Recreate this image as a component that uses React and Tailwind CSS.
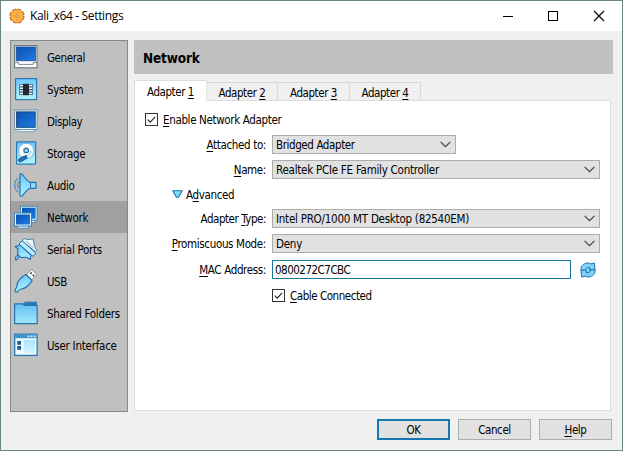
import React from "react";

const U = ({ children }) => (
  <span className="underline decoration-1 underline-offset-2">{children}</span>
);

const Blues = () => (
  <defs>
    <linearGradient id="sky" x1="0" y1="0" x2="0" y2="1">
      <stop offset="0" stopColor="#6cc8fa" />
      <stop offset="1" stopColor="#b4f3ff" />
    </linearGradient>
    <linearGradient id="screen" x1="0" y1="0" x2="1" y2="1">
      <stop offset="0" stopColor="#0a50b4" />
      <stop offset="1" stopColor="#1f7ce0" />
    </linearGradient>
    <linearGradient id="folder" x1="0" y1="0" x2="0" y2="1">
      <stop offset="0" stopColor="#62bdf2" />
      <stop offset="1" stopColor="#a2eafc" />
    </linearGradient>
  </defs>
);

const GeneralIcon = () => (
  <>
    <rect x="0.6" y="0.6" width="22.4" height="22.2" fill="#fff" stroke="#67737e" strokeWidth="1.1" />
    <rect x="2.2" y="2" width="19.2" height="13.8" fill="url(#screen)" stroke="#1d4d91" strokeWidth="0.8" />
    <path d="M1 17.6h3.6v1.8h14.6v-1.8H23" fill="none" stroke="#7c8893" strokeWidth="1" />
  </>
);
const SystemIcon = () => (
  <>
    <rect x="1.6" y="1.6" width="21" height="21" fill="url(#sky)" stroke="#2a78ae" strokeWidth="1.2" />
    <rect x="5.3" y="7" width="13.4" height="11" fill="#3b5668" />
    <path d="M6 8.5h12M6 11.2h12M6 13.9h12M6 16.5h12" stroke="#f2fcff" strokeWidth="1.4" />
    <rect x="9" y="6.8" width="6" height="11.4" fill="#202a35" />
  </>
);
const DisplayIcon = () => (
  <>
    <path d="M4 20h16v2.6H4z" fill="#e9fbff" stroke="#5f9ab5" strokeWidth="0.7" />
    <rect x="0.7" y="1" width="22.4" height="19.4" fill="#e2faff" stroke="#5c8399" strokeWidth="0.8" />
    <rect x="2.6" y="2.9" width="18.6" height="15.4" fill="url(#screen)" stroke="#173d75" strokeWidth="0.9" />
  </>
);
const StorageIcon = () => (
  <>
    <rect x="2.6" y="0.8" width="19" height="22.4" rx="0.8" fill="url(#sky)" stroke="#2a78ba" strokeWidth="1.2" />
    <circle cx="12.2" cy="9.8" r="7.6" fill="#fff" stroke="#6cacd0" strokeWidth="0.8" />
    <circle cx="12.2" cy="9.4" r="2.3" fill="#9ad6f5" stroke="#2971a4" strokeWidth="1.2" />
    <path d="M16.8 10c.3 3.5-2.6 4.6-6 4.8" fill="none" stroke="#6fb2d2" strokeWidth="1" />
    <path d="M12.3 14.6l1 2.6-6.2 3.6c-2 .9-3.8-1.3-2.2-2.9l3.8-2.3z" fill="#2273b8" stroke="#124d80" strokeWidth="0.7" />
  </>
);
const AudioIcon = () => (
  <>
    <path d="M4 5.3C-.4 8.5-.4 15.5 4 19M5.2 8.5c-2.3 1.5-2.3 5.5 0 7" fill="none" stroke="#4b90bf" strokeWidth="1.2" />
    <path d="M6 1.5c.3-1 2-.6 2.700.4C11 5 13 8 16 9.300h6v6h-6C13 16.500 11 19.500 8.700 22.400c-.7 1-2.400 1.300-2.700.300z" fill="url(#sky)" stroke="#2671ad" strokeWidth="1.2" strokeLinejoin="round" />
    <path d="M16.500 9v6.500" stroke="#2671ad" />
  </>
);
const NetworkIcon = () => (
  <>
    <path d="M10 15h11v2.500H10z" fill="#def9ff" stroke="#397ca9" strokeWidth="0.8" />
    <rect x="6.500" y="1.200" width="16.600" height="14" fill="#d9f8ff" stroke="#397ca9" strokeWidth="0.9" />
    <rect x="8" y="2.700" width="13.600" height="11" fill="url(#screen)" />
    <path d="M3.500 20.700h11v2.500h-11z" fill="#def9ff" stroke="#397ca9" strokeWidth="0.8" />
    <rect x="0.500" y="8" width="17" height="13" fill="#d9f8ff" stroke="#397ca9" strokeWidth="0.9" />
    <rect x="2" y="9.500" width="14" height="10" fill="url(#screen)" />
  </>
);
const SerialIcon = () => (
  <>
    <path d="M2.200 22c0-2 2-3 3-4" fill="none" stroke="#2467a0" strokeWidth="3" strokeLinecap="round" />
    <path d="M2.200 22c0-2 2-3 3-4" fill="none" stroke="#8edcfa" strokeWidth="1.200" />
    <path d="M1.200 9.500L6.500 8 17 18l-.8 4.500-3.700-2.200-6 .2-3-3.500.5-5z" fill="url(#sky)" stroke="#2671ad" strokeWidth="1.200" strokeLinejoin="round" />
    <path d="M5 7l3.200-3.300L22 16.400l-3 3z" fill="#b9edff" stroke="#2671ad" strokeLinejoin="round" />
    <path d="M8.400 3.800l2.400-2.400 2 1.200 6.400-.6 1.300 7.400 2.200 3.600-1.500 1.600z" fill="#e8f9ff" stroke="#47799b" strokeWidth="0.9" strokeLinejoin="round" />
    <path d="M12 4l7.600 7" stroke="#8fa9b9" strokeWidth="0.9" />
  </>
);
const UsbIcon = () => (
  <>
    <path d="M12.800 5.500l5-5 5 5.200-5 5z" fill="#fff" stroke="#7b848a" strokeWidth="0.9" />
    <path d="M16.400 4.800l1.300-1.300M18.800 7.200l1.300-1.300" stroke="#343c43" strokeWidth="1.700" />
    <path d="M1 22.800c-.6-3 1.700-3 2-6C3 10.500 8.500 8 11.800 5.400l6.300 6.300C15.500 15 13.500 19.400 7.300 20c-3 .4-3 2.600-5 3.200z" fill="url(#sky)" stroke="#2671ad" strokeWidth="1.200" strokeLinejoin="round" />
  </>
);
const FolderIcon = () => (
  <>
    <path d="M9 4l2-2.800h11.500V6H9z" fill="#2c7cba" stroke="#2671ad" />
    <path d="M.6 2.800h8l2 1.600h12.600v18.200H.6z" fill="url(#folder)" stroke="#2671ad" strokeWidth="1.200" />
  </>
);
const InterfaceIcon = () => (
  <>
    <rect x="0.700" y="1.200" width="22.400" height="21.200" fill="#eefcff" stroke="#2878b0" strokeWidth="1.300" />
    <rect x="1.200" y="1.600" width="21.400" height="3.600" fill="#3c93cf" />
    <path d="M13.500 3.400h1.800M16.600 3.400h1.800M19.700 3.400h1.800" stroke="#d6f6ff" strokeWidth="1.600" />
    <path d="M3.200 8h3.800v3.800H3.200zM3.200 13h3.800v3.800H3.200z" fill="#1b5c98" />
    <rect x="9.800" y="7" width="11.200" height="13.200" fill="url(#sky)" opacity=".5" />
  </>
);

const items = [
  ["General", GeneralIcon, "tracking-[-0.4px]"],
  ["System", SystemIcon, "tracking-[-0.4px]"],
  ["Display", DisplayIcon, "tracking-[-0.4px]"],
  ["Storage", StorageIcon, "tracking-[-0.3px]"],
  ["Audio", AudioIcon, "tracking-[-0.4px]"],
  ["Network", NetworkIcon, "tracking-[-0.3px]"],
  ["Serial Ports", SerialIcon, "tracking-[-0.3px]"],
  ["USB", UsbIcon, "tracking-[-0.5px]"],
  ["Shared Folders", FolderIcon, "tracking-[-0.3px]"],
  ["User Interface", InterfaceIcon, "tracking-[-0.25px]"],
];

const Check = () => (
  <svg className="block h-[13px] w-[13px] shrink-0" viewBox="0 0 13 13">
    <rect x="0.5" y="0.5" width="12" height="12" fill="#fff" stroke="#333" />
    <path d="M2.800 6.600l2.400 2.500 5-5.200" fill="none" stroke="#222" strokeWidth="1.100" />
  </svg>
);

const Combo = ({ className, children }) => (
  <div className={"flex h-[19px] items-center justify-between border border-[#adadad] bg-[#e1e1e1] pl-[3px] pr-1 " + className}>
    <span className="pt-px">{children}</span>
    <svg className="block h-[7px] w-[11px]" viewBox="0 0 11 7">
      <path d="M.6.8l4.900 4.900L10.400.8" fill="none" stroke="#444" strokeWidth="1.200" />
    </svg>
  </div>
);

const Row = ({ label, className, children }) => (
  <div className={"flex items-center " + className}>
    <div className="w-[131px] shrink-0 pt-px text-right tracking-[-0.35px]">{label}</div>
    <div className="w-[6px] shrink-0" />
    {children}
  </div>
);

const Tab = ({ n, className }) => (
  <div className={"flex items-center justify-center pt-px tracking-[-0.45px] " + className}>
    <span>Adapter <U>{n}</U></span>
  </div>
);

export default function App() {
  return (
    <div className="flex h-[451px] w-[623px] flex-col overflow-hidden whitespace-pre border border-[#6d8580] bg-[#f0f0f0] font-['DejaVu_Sans_Condensed','DejaVu_Sans',sans-serif] text-[11.5px] leading-[14px] tracking-[-0.25px] text-black [font-stretch:condensed]">
      <header className="flex h-[30px] shrink-0 items-center bg-white pl-2">
        <svg className="block h-4 w-4" viewBox="0 0 16 16">
          <circle cx="8" cy="8" r="6.900" fill="#f8a63a" stroke="#c8702a" strokeWidth="1.400" strokeDasharray="4.400 1" />
          <circle cx="8" cy="8" r="6.200" fill="#fdb547" />
          <circle cx="8" cy="8" r="1.300" fill="#fff4d4" stroke="#c06a20" strokeWidth=".8" />
          <path d="M8 3.200v1.300M8 11.500v1.300M3.200 8h1.300M11.500 8h1.300M4.600 4.600l.8.8M10.600 10.600l.8.800M4.600 11.400l.8-.8M10.600 5.400l.8-.8" stroke="#d5852c" />
        </svg>
        <h1 className="ml-[5px] font-['Open_Sans','Noto_Sans',sans-serif] text-[12px] tracking-[-0.35px] [font-stretch:normal]">Kali_x64 - Settings</h1>
        <svg className="ml-auto mr-[17px] block h-[12px] w-[102px]" viewBox="0 0 102 12">
          <path d="M0 6.500h10" stroke="#000" />
          <rect x="45.500" y="1.500" width="9" height="9" fill="none" stroke="#000" />
          <path d="M91 1l10 10M101 1L91 11" stroke="#000" strokeWidth="1.100" />
        </svg>
      </header>
      <main className="flex h-[373px] shrink-0 pl-[9px] pt-[9px]">
        <nav className="h-[372px] w-[118px] shrink-0 border border-[#858988] bg-[#c0c0c0]">
          {items.map(([name, Icon, track]) => (
            <div key={name} className={"flex h-8 items-center pl-[3px] " + (name === "Network" ? "bg-[#a0a0a0]" : "")}>
              <svg className="block h-6 w-6 shrink-0" viewBox="0 0 24 24"><Blues /><Icon /></svg>
              <span className={"ml-[9px] pt-px " + track}>{name}</span>
            </div>
          ))}
        </nav>
        <section className="ml-[6px] flex w-[479px] flex-col">
          <h2 className="flex h-[34px] shrink-0 items-center bg-[#c0c0c0] pl-[9px] pt-px text-[13.500px] font-bold tracking-[-0.15px]">Network</h2>
          <div className="mt-[6px] flex h-[21px] shrink-0 items-end">
            <Tab n="1" className="z-10 h-[21px] w-[73px] border-x border-t border-[#dcdcdc] border-r-[#e4e4e4] bg-white" />
            <Tab n="2" className="h-[19px] w-[71px] border-r border-t border-[#d9d9d9]" />
            <Tab n="3" className="h-[19px] w-[72px] border-r border-t border-[#d9d9d9]" />
            <Tab n="4" className="h-[19px] w-[71px] border-r border-t border-[#d9d9d9]" />
          </div>
          <div className="flex h-[310px] w-[477px] shrink-0 flex-col border border-t-0 border-[#dcdcdc] bg-white">
            <div className="-mt-px ml-[73px] h-px shrink-0 bg-[#dcdcdc]" />
            <div className="ml-[10px] mt-[12px] flex h-[13px] shrink-0 items-center gap-[5px] tracking-[-0.35px]">
              <Check /><span className="pt-px"><U>E</U>nable Network Adapter</span>
            </div>
            <Row className="mt-[9px]" label={<><U>A</U>ttached to:</>}><Combo className="w-[184px] tracking-[-0.4px]">Bridged Adapter</Combo></Row>
            <Row className="mt-[6px]" label={<><U>N</U>ame:</>}><Combo className="w-[328px]">Realtek PCIe FE Family Controller</Combo></Row>
            <div className="ml-[37px] mt-[8px] flex h-[14px] shrink-0 items-center gap-[3px]">
              <svg className="block h-[9px] w-[11px]" viewBox="0 0 11 9">
                <path d="M.8.8h9.400L6.500 7.300h-2z" fill="#83dcfa" stroke="#1b73ad" strokeWidth="1.100" strokeLinejoin="round" />
              </svg>
              <span className="pt-px tracking-[-0.35px]">A<U>d</U>vanced</span>
            </div>
            <Row className="mt-[8px]" label={<span className="tracking-[-0.45px]">Adapter <U>T</U>ype:</span>}><Combo className="w-[328px]">Intel PRO/1000 MT Desktop (82540EM)</Combo></Row>
            <Row className="mt-[6px]" label={<><U>P</U>romiscuous Mode:</>}><Combo className="w-[328px]">Deny</Combo></Row>
            <Row className="mt-[7px]" label={<><U>M</U>AC Address:</>}>
              <div className="flex h-[19px] w-[299px] items-center border border-[#17779c] pl-[2px] pt-px tracking-[-0.5px]">0800272C7CBC</div>
              <svg className="ml-[9px] block h-4 w-4" viewBox="0 0 16 16">
                <path d="M1 7.600C1 3 4.500.8 8.500 1l2 .8L14.300 1l.8 6.600V9c-.3 4-3.600 6.300-7.600 6l-2-.8L1.700 15 1 9z" fill="#7fd2f8" stroke="#1f70b0" strokeWidth="1" strokeLinejoin="round" />
                <path d="M1.200 8.200h4.300c.2-2.400 2.500-3.500 4.700-2.200L9.400 7.800h5.500M10.600 8c-.2 2.400-2.500 3.500-4.700 2.200l.8-1.800" fill="none" stroke="#1767a5" strokeWidth="1" strokeLinejoin="round" />
              </svg>
            </Row>
            <div className="ml-[137px] mt-[10px] flex h-[13px] shrink-0 items-center gap-[5px] tracking-[-0.45px]">
              <Check /><span className="pt-px"><U>C</U>able Connected</span>
            </div>
          </div>
        </section>
      </main>
      <footer className="mt-[15px] flex justify-end gap-2 pr-[10px] tracking-[-0.4px]">
        <button className="h-[21px] w-[73px] border-2 border-[#1476b3] bg-[#e1e1e1]">OK</button>
        <button className="h-[21px] w-[73px] border border-[#adadad] bg-[#e1e1e1]">Cancel</button>
        <button className="h-[21px] w-[73px] border border-[#adadad] bg-[#e1e1e1]"><U>H</U>elp</button>
      </footer>
    </div>
  );
}
